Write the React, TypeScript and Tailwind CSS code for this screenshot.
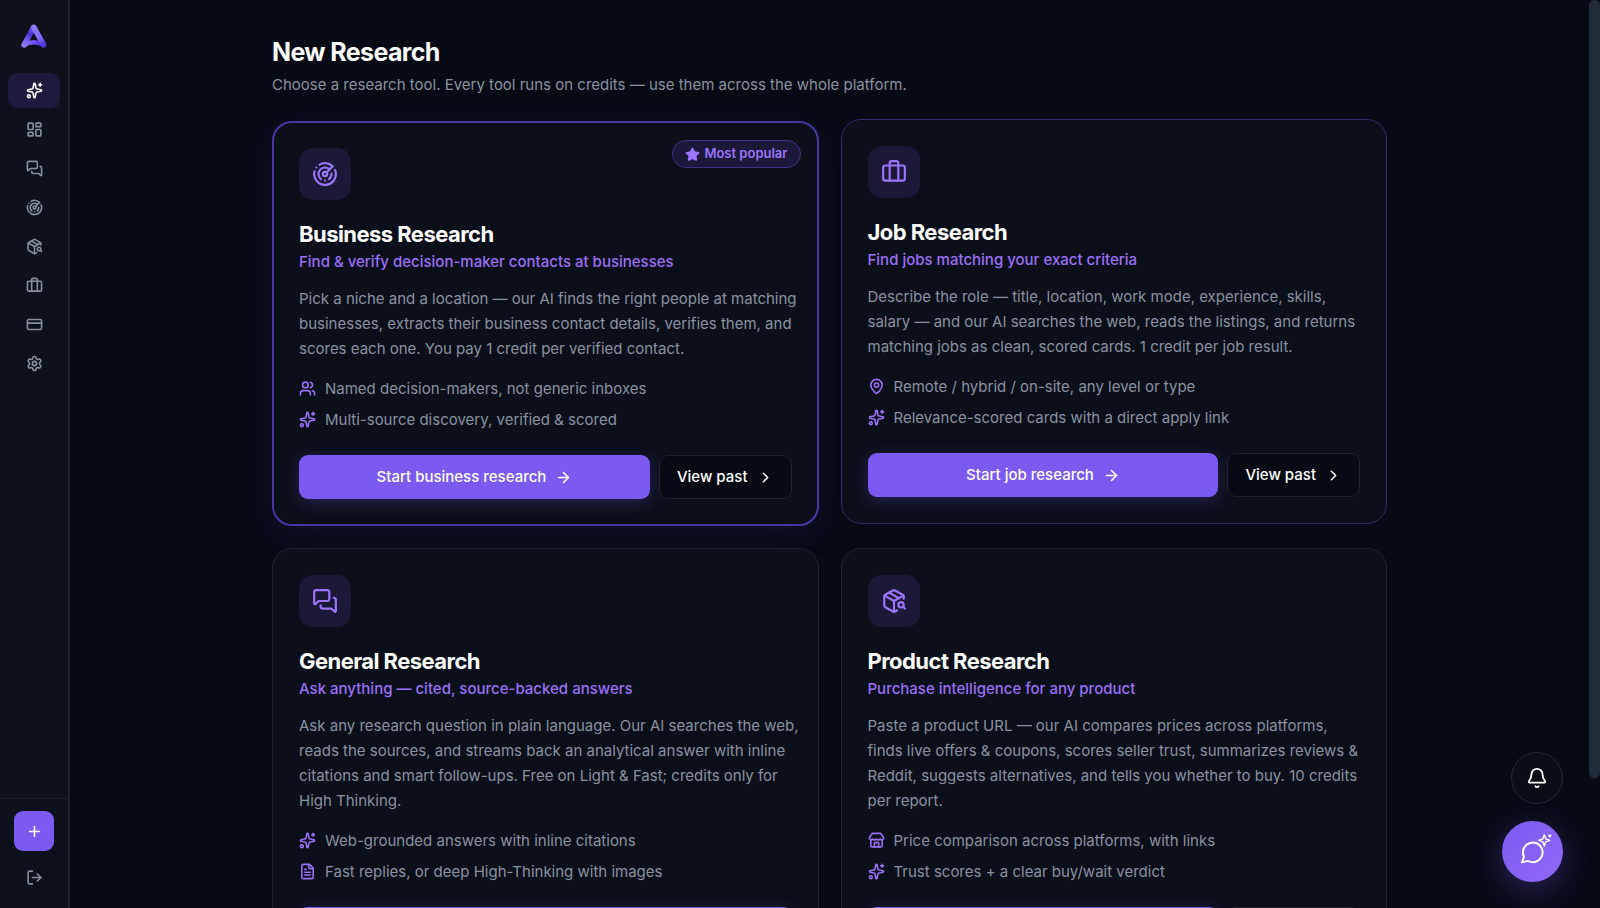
import type { LucideIcon } from "lucide-react";
import {
    ArrowRight,
    Bell,
    Briefcase,
    ChevronRight,
    CreditCard,
    FileText,
    LayoutDashboard,
    LogOut,
    MapPin,
    MessagesSquare,
    PackageSearch,
    Plus,
    Radar,
    Settings,
    Sparkles,
    Star,
    Store,
    Users,
} from "lucide-react";
import clsx from "clsx";

type Tool = {
    title: string;
    tagline: string;
    description: string;
    icon: LucideIcon;
    points: { icon: LucideIcon; text: string }[];
    action: string;
    variant: "popular" | "active" | "default";
    hasHistory: boolean;
}

const navItems: { label: string; icon: LucideIcon }[] = [
    { label: "New Research", icon: Sparkles },
    { label: "Dashboard", icon: LayoutDashboard },
    { label: "General Research", icon: MessagesSquare },
    { label: "Business Research", icon: Radar },
    { label: "Product Research", icon: PackageSearch },
    { label: "Job Research", icon: Briefcase },
    { label: "Billing", icon: CreditCard },
    { label: "Settings", icon: Settings },
]

const tools: Tool[] = [
    {
        title: "Business Research",
        tagline: "Find & verify decision-maker contacts at businesses",
        description: "Pick a niche and a location — our AI finds the right people at matching businesses, extracts their business contact details, verifies them, and scores each one. You pay 1 credit per verified contact.",
        icon: Radar,
        points: [
            { icon: Users, text: "Named decision-makers, not generic inboxes" },
            { icon: Sparkles, text: "Multi-source discovery, verified & scored" },
        ],
        action: "Start business research",
        variant: "popular",
        hasHistory: true,
    },
    {
        title: "Job Research",
        tagline: "Find jobs matching your exact criteria",
        description: "Describe the role — title, location, work mode, experience, skills, salary — and our AI searches the web, reads the listings, and returns matching jobs as clean, scored cards. 1 credit per job result.",
        icon: Briefcase,
        points: [
            { icon: MapPin, text: "Remote / hybrid / on-site, any level or type" },
            { icon: Sparkles, text: "Relevance-scored cards with a direct apply link" },
        ],
        action: "Start job research",
        variant: "active",
        hasHistory: true,
    },
    {
        title: "General Research",
        tagline: "Ask anything — cited, source-backed answers",
        description: "Ask any research question in plain language. Our AI searches the web, reads the sources, and streams back an analytical answer with inline citations and smart follow-ups. Free on Light & Fast; credits only for High Thinking.",
        icon: MessagesSquare,
        points: [
            { icon: Sparkles, text: "Web-grounded answers with inline citations" },
            { icon: FileText, text: "Fast replies, or deep High-Thinking with images" },
        ],
        action: "Start general research",
        variant: "default",
        hasHistory: false,
    },
    {
        title: "Product Research",
        tagline: "Purchase intelligence for any product",
        description: "Paste a product URL — our AI compares prices across platforms, finds\u00a0live offers & coupons, scores seller trust, summarizes reviews & Reddit, suggests alternatives, and tells you whether to buy. 10 credits per report.",
        icon: PackageSearch,
        points: [
            { icon: Store, text: "Price comparison across platforms, with links" },
            { icon: Sparkles, text: "Trust scores + a clear buy/wait verdict" },
        ],
        action: "Start product research",
        variant: "default",
        hasHistory: true,
    },
]

function Logo() {
    return (
        <svg viewBox="0 0 26 24" className="h-6 w-[26px]" fill="none" strokeLinecap="round" strokeLinejoin="round">
            <defs>
                <linearGradient id="logo-left" x1="14" y1="3" x2="3" y2="21" gradientUnits="userSpaceOnUse">
                    <stop stopColor="#8472fa" />
                    <stop offset="0.4" stopColor="#4a30d2" />
                    <stop offset="0.75" stopColor="#7560f0" />
                    <stop offset="1" stopColor="#8b78ff" />
                </linearGradient>
                <linearGradient id="logo-right" x1="13" y1="3" x2="23" y2="21" gradientUnits="userSpaceOnUse">
                    <stop stopColor="#8b7bff" />
                    <stop offset="0.6" stopColor="#7d68fa" />
                    <stop offset="1" stopColor="#4f35dc" />
                </linearGradient>
                <linearGradient id="logo-base" x1="3" y1="21" x2="23" y2="21" gradientUnits="userSpaceOnUse">
                    <stop stopColor="#8b78ff" />
                    <stop offset="0.55" stopColor="#6b50ee" />
                    <stop offset="1" stopColor="#3f22c8" />
                </linearGradient>
            </defs>
            <path d="M3 21 Q12.5 15.5 22.5 21" stroke="url(#logo-base)" strokeWidth="4.5" />
            <path d="M12.5 3.5 L3.2 20.8" stroke="url(#logo-left)" strokeWidth="5.6" />
            <path d="M13 3.5 L22.6 20.8" stroke="url(#logo-right)" strokeWidth="5.6" />
        </svg>
    )
}

function ChatSparkIcon() {
    return (
        <svg viewBox="0 0 40 40" className="size-10" fill="none" stroke="currentColor" strokeWidth="2" strokeLinecap="round" strokeLinejoin="round">
            <path d="M11 24.7A9.8 9.8 0 1 1 15 28.9L9 30.4Z" />
            <path fill="#845ff4" strokeWidth="1.4" d="M31.3 2.6 32.7 6.8 36.8 8.3 32.7 9.8 31.3 14 29.9 9.8 25.7 8.3 29.9 6.8Z" />
            <circle cx="36.8" cy="3.8" r="1.6" fill="currentColor" stroke="none" />
        </svg>
    )
}

function Sidebar() {
    return (
        <aside className="flex w-[70px] shrink-0 flex-col border-r-2 border-[#1d212c] bg-[#0d111c]">
            <a href="#" aria-label="Home" className="flex h-[73px] items-center justify-center pb-0.5">
                <Logo />
            </a>

            <nav className="flex flex-1 flex-col gap-1 px-2">
                {navItems.map(({ label, icon: Icon }, index) => {
                    return (
                        <a
                            key={label}
                            href="#"
                            aria-label={label}
                            className={clsx("flex h-[35px] items-center justify-center rounded-[9px]", index === 0 ? "bg-[#1e1a3e] text-white" : "text-[#8790a0]")}
                        >
                            <Icon size={17} strokeWidth={2.25} />
                        </a>
                    )
                })}
            </nav>

            <div className="flex flex-col items-center gap-[18px] border-t border-[#1d212c] pt-3 pb-[22px]">
                <button aria-label="New" className="flex size-10 items-center justify-center rounded-[9px] bg-[#7b5af2] text-white">
                    <Plus size={17} strokeWidth={2.25} />
                </button>
                <button aria-label="Log out" className="text-[#8790a0]">
                    <LogOut size={17} strokeWidth={2.25} />
                </button>
            </div>
        </aside>
    )
}

function ToolCard({ tool }: { tool: Tool }) {
    const Icon = tool.icon

    return (
        <article
            className={clsx(
                "relative flex flex-col rounded-[20px] bg-[#0b0f1a]",
                tool.variant === "popular" && "border-2 border-[#4a36a2] p-[25px] shadow-[0_8px_32px_rgba(124,92,246,0.1)]",
                tool.variant === "active" && "-translate-y-0.5 border border-[#332a70] p-[26px]",
                tool.variant === "default" && "border border-[#1f232e] p-[26px]",
            )}
        >
            {tool.variant === "popular" && (
                <span className="absolute top-[17px] right-4 flex h-7 items-center gap-1 rounded-full border border-[#3f3188] bg-[#1c183a] px-3 text-[13px] font-semibold text-[#9b76fb]">
                    <Star size={15} fill="currentColor" />
                    Most popular
                </span>
            )}

            <div className="flex size-[52px] items-center justify-center rounded-[14px] bg-[#1b1838] text-[#9b76fb]">
                <Icon size={26} />
            </div>

            <h2 className="mt-[18px] text-[22px] leading-8 font-bold tracking-tight text-white">{tool.title}</h2>
            <p className="text-[15px] leading-6 font-medium text-[#9b70f8]">{tool.tagline}</p>
            <p className="mt-3 -mr-2 text-[15px] leading-[25px] text-[#8a92a2]">{tool.description}</p>

            <ul className="mt-4 mb-6 space-y-2 text-[15px] leading-[23px] text-[#8a92a2]">
                {tool.points.map(({ icon: PointIcon, text }) => {
                    return (
                        <li key={text} className="flex items-center gap-[9px]">
                            <PointIcon size={17} strokeWidth={2.25} className="shrink-0 text-[#9b70f8]" />
                            {text}
                        </li>
                    )
                })}
            </ul>

            <div className="mt-auto flex gap-[9px] text-[15px] font-medium text-white">
                <button className="flex h-11 flex-1 items-center justify-center gap-[9px] rounded-[9px] bg-[#7b5af2] shadow-[0_4px_16px_rgba(123,90,242,0.25)]">
                    {tool.action}
                    <ArrowRight size={17} strokeWidth={2.25} />
                </button>
                {tool.hasHistory && (
                    <button className="flex h-11 items-center gap-[9px] rounded-[9px] border border-[#1f232e] bg-[#070a14] px-[17px]">
                        View past
                        <ChevronRight size={17} strokeWidth={2.25} />
                    </button>
                )}
            </div>
        </article>
    )
}

export default function App() {
    return (
        <div className="flex h-screen overflow-hidden bg-[#060a14] font-['Inter',sans-serif] text-white antialiased">
            <Sidebar />

            <main className="flex-1 overflow-hidden px-6 pt-9">
                <div className="mx-auto max-w-[1115px]">
                    <header>
                        <h1 className="text-[25px] leading-8 font-bold tracking-tight">New Research</h1>
                        <p className="mt-[5px] text-[15px] leading-6 text-[#8a92a2]">Choose a research tool. Every tool runs on credits — use them across the whole platform.</p>
                    </header>

                    <div className="mt-6 grid grid-cols-2 gap-[22px]">
                        {tools.map((tool) => {
                            return <ToolCard key={tool.title} tool={tool} />
                        })}
                    </div>
                </div>
            </main>

            <div className="w-[11px] shrink-0">
                <div className="h-6/7 rounded-full bg-[#222b3a]"></div>
            </div>

            <div className="fixed right-[37px] bottom-[26px] flex flex-col items-end gap-[17px]">
                <button aria-label="Notifications" className="flex size-[52px] items-center justify-center rounded-full border border-[#262a35] bg-[#090d17] text-white">
                    <Bell size={22} />
                </button>
                <button aria-label="Open chat" className="flex size-[61px] items-center justify-center rounded-full bg-linear-to-br from-[#7b5af2] to-[#9268f8] text-white shadow-[0_8px_32px_rgba(123,90,242,0.35)]">
                    <ChatSparkIcon />
                </button>
            </div>
        </div>
    )
}
